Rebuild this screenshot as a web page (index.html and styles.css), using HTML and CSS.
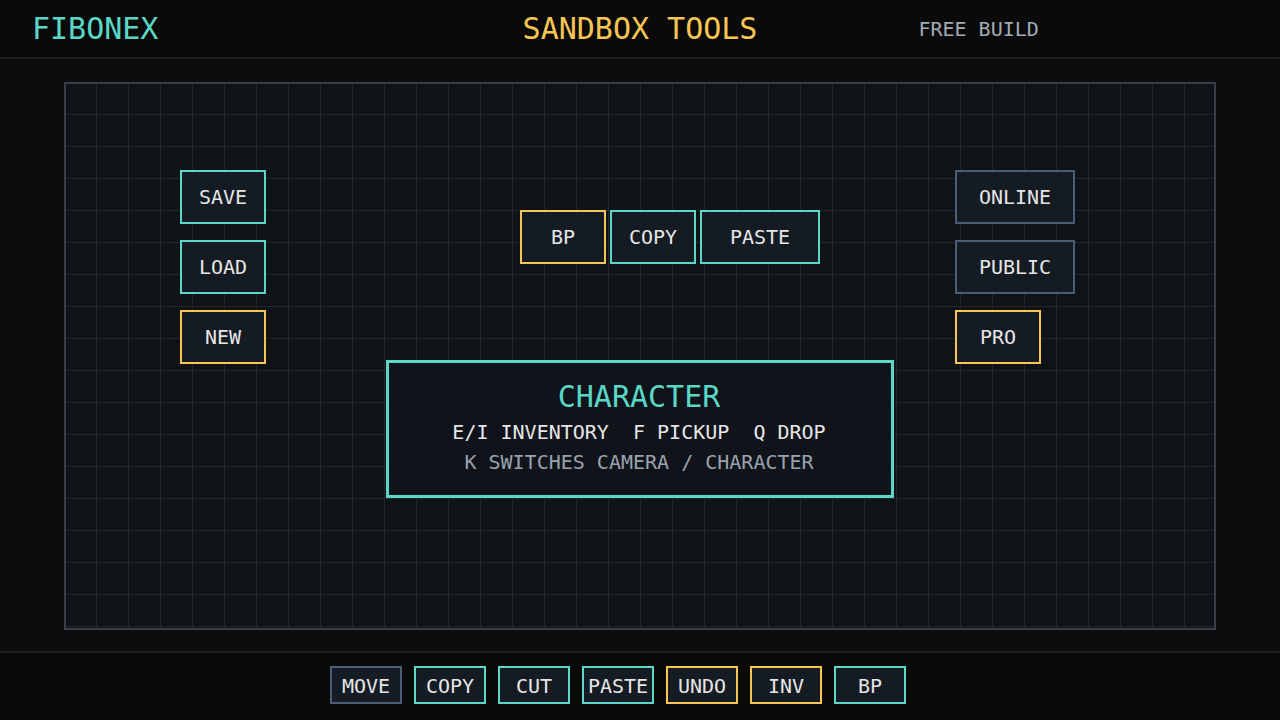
FILE: index.html
```html
<!DOCTYPE html>
<html lang="en">
<head>
    <meta charset="UTF-8">
    <meta name="viewport" content="width=device-width, initial-scale=1.0">
    <title>Fibonex - Sandbox Tools</title>
    <link rel="stylesheet" href="styles.css">
</head>
<body>
    <header class="topbar">
        <div class="brand">FIBONEX</div>
        <div class="title">SANDBOX TOOLS</div>
        <div class="mode">FREE BUILD</div>
    </header>

    <main class="workspace">
        <section class="canvas">
            <div class="tool-row">
                <div class="stack">
                    <button class="btn teal">SAVE</button>
                    <button class="btn teal">LOAD</button>
                    <button class="btn gold">NEW</button>
                </div>
                <div class="clip-group">
                    <button class="btn gold">BP</button>
                    <button class="btn teal">COPY</button>
                    <button class="btn teal wide">PASTE</button>
                </div>
                <div class="stack net">
                    <button class="btn slate wide">ONLINE</button>
                    <button class="btn slate wide">PUBLIC</button>
                    <button class="btn gold">PRO</button>
                </div>
            </div>

            <div class="hint-box">
                <h2 class="hint-title">CHARACTER</h2>
                <p class="hint-keys">E/I INVENTORY  F PICKUP  Q DROP</p>
                <p class="hint-note">K SWITCHES CAMERA / CHARACTER</p>
            </div>
        </section>
    </main>

    <footer class="toolbar">
        <button class="key slate">MOVE</button>
        <button class="key teal">COPY</button>
        <button class="key teal">CUT</button>
        <button class="key teal">PASTE</button>
        <button class="key gold">UNDO</button>
        <button class="key gold">INV</button>
        <button class="key teal">BP</button>
    </footer>
</body>
</html>
```

FILE: styles.css
```css
* {
    box-sizing: border-box;
}

body {
    margin: 0;
    height: 720px;
    display: flex;
    flex-direction: column;
    overflow: hidden;
    background: #0d0d0d;
    color: #e6e6e6;
    font-family: 'DejaVu Sans Mono', 'Liberation Mono', monospace;
}

/* top bar */
.topbar {
    height: 59px;
    display: grid;
    grid-template-columns: 1fr auto 1fr;
    align-items: center;
    padding: 0 32px;
    background: #0a0a0a;
    border-bottom: 2px solid #1f1f1f;
}

.brand,
.title {
    font-size: 30px;
    line-height: 36px;
}

.brand {
    color: #5ad7c7;
}

.title {
    color: #f7c552;
}

.mode {
    justify-self: start;
    margin-left: 161px;
    padding-top: 1px;
    font-size: 20px;
    line-height: 30px;
    color: #a3abb4;
}

/* canvas area */
.workspace {
    flex: 1;
    padding: 23px 64px 0;
}

.canvas {
    height: 548px;
    display: flex;
    flex-direction: column;
    padding-top: 86px;
    border: 2px solid #363e4a;
    background-color: #0f1217;
    background-image:
        linear-gradient(to right, #22272f 1px, transparent 1px),
        linear-gradient(to bottom, #22272f 1px, transparent 1px);
    background-size: 32px 32px;
    background-origin: border-box;
}

.tool-row {
    display: flex;
    align-items: flex-start;
    padding-left: 114px;
}

.stack {
    display: flex;
    flex-direction: column;
    gap: 16px;
}

.clip-group {
    display: flex;
    gap: 4px;
    margin-top: 40px;
    margin-left: 254px;
}

.stack.net {
    margin-left: 135px;
}

.btn,
.key {
    padding: 0 0 1px;
    border: 2px solid;
    background: #151b22;
    color: #e6e6e6;
    font-family: inherit;
    font-size: 20px;
    line-height: 1;
    cursor: pointer;
}

.btn {
    width: 86px;
    height: 54px;
}

.btn.wide {
    width: 120px;
}

.teal {
    border-color: #5ad7c7;
}

.gold {
    border-color: #f7c552;
}

.slate {
    border-color: #4a5d76;
}

/* controls hint */
.hint-box {
    align-self: center;
    width: 508px;
    margin-top: -4px;
    padding: 16px 2px 18px 0;
    border: 3px solid #5ad7c7;
    background: #10141a;
    text-align: center;
}

.hint-title {
    margin: 0 0 2px;
    font-size: 30px;
    font-weight: normal;
    line-height: 36px;
    color: #5ad7c7;
}

.hint-keys,
.hint-note {
    margin: 0;
    font-size: 20px;
    line-height: 30px;
    white-space: pre;
}

.hint-note {
    color: #9aa3ad;
}

/* bottom toolbar */
.toolbar {
    height: 69px;
    display: flex;
    justify-content: center;
    align-items: flex-start;
    gap: 12px;
    padding: 13px 44px 0 0;
    background: #0a0a0a;
    border-top: 2px solid #1f1f1f;
}

.key {
    width: 72px;
    height: 38px;
    padding: 1px 0 0;
}

.key.slate {
    background: #161c25;
}
```
